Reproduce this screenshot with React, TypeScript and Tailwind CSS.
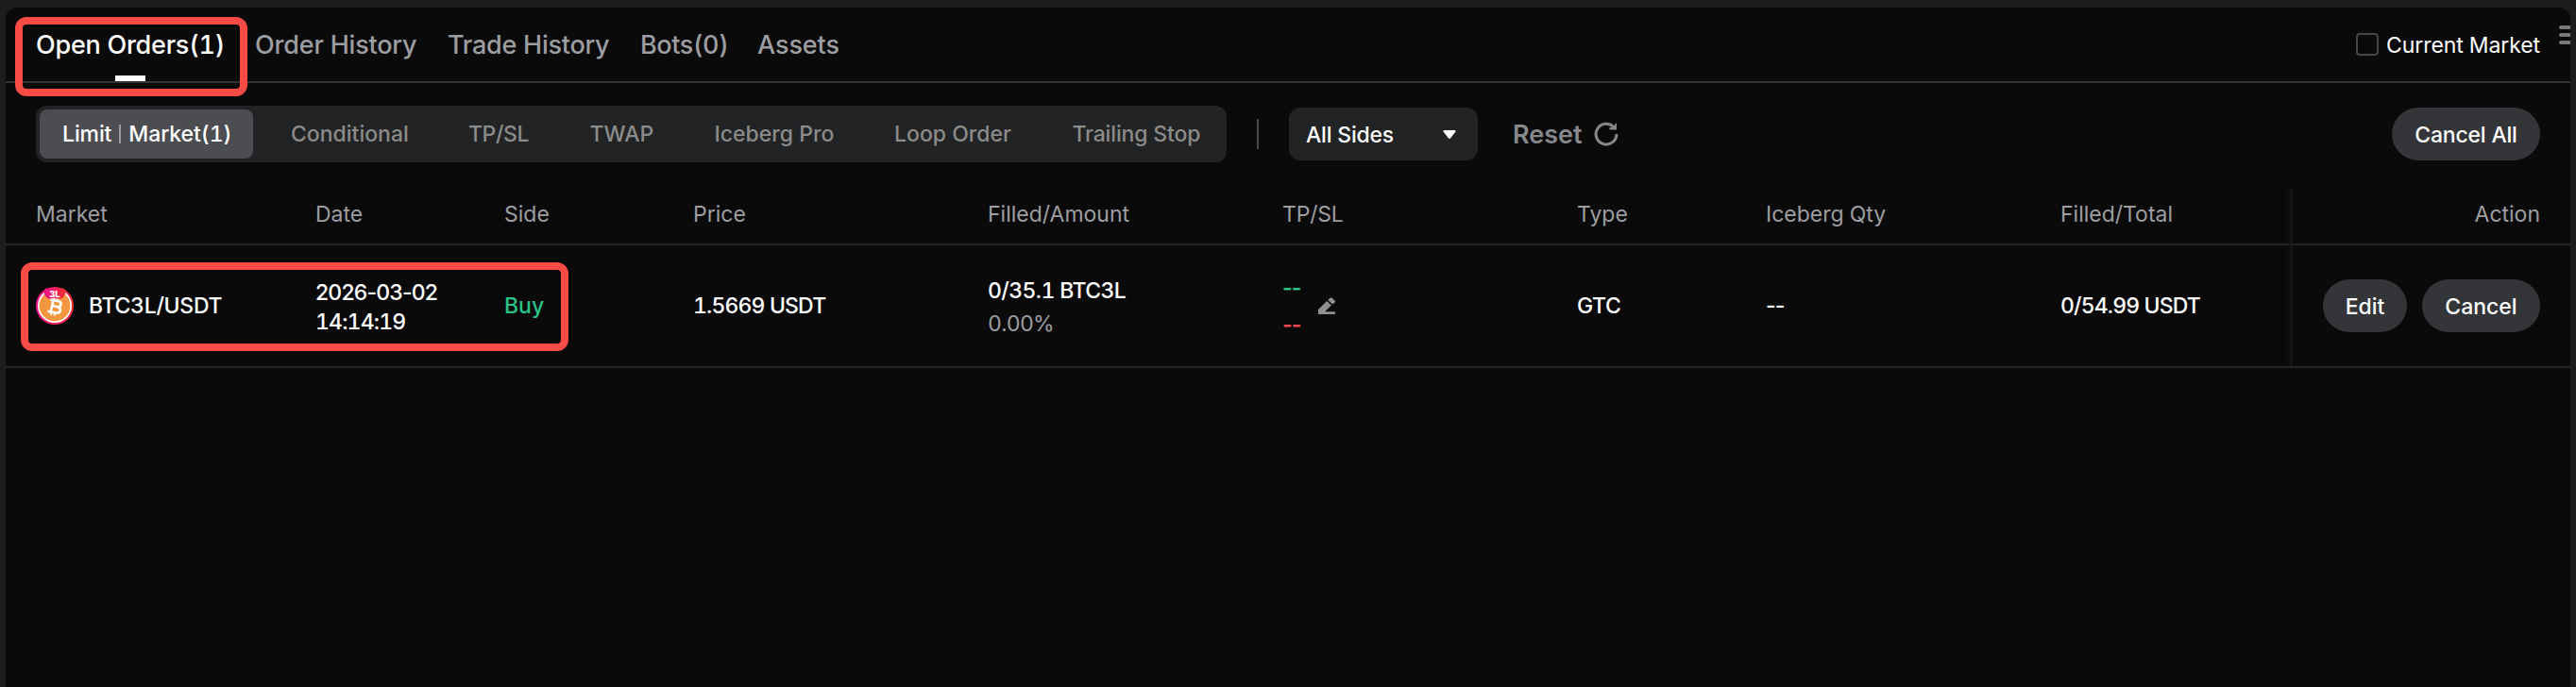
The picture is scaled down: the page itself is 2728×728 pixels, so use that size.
import React from 'react';

const tabs = [
  { label: 'Open Orders(1)', style: 'w-[200px] tracking-[-0.25px]', active: true },
  { label: 'Order History', style: 'w-[172px] tracking-[-0.2px]' },
  { label: 'Trade History', style: 'w-[172px] tracking-[-0.25px]' },
  { label: 'Bots(0)', style: 'w-[92px] tracking-[-0.4px]' },
  { label: 'Assets', style: 'w-[88px] tracking-[-0.1px]' },
];

const filters = [
  { label: 'Conditional', style: 'w-[124px]' },
  { label: 'TP/SL', style: 'w-[64.5px] tracking-[-0.4px]' },
  { label: 'TWAP', style: 'w-[68px]' },
  { label: 'Iceberg Pro', style: 'w-[126.5px]' },
  { label: 'Loop Order', style: 'w-[124.5px]' },
  { label: 'Trailing Stop', style: 'w-[135.5px] tracking-[-0.15px]' },
];

const columns = 'grid grid-cols-[296px_200px_200px_312px_312px_312px_200px_312px_246px_262px]';

const CoinIcon = () => (
  <svg className="w-10 h-10 shrink-0" viewBox="0 0 40 40">
    <defs>
      <linearGradient id="ring" x1="0" y1="0" x2="1" y2="0">
        <stop offset="0" stopColor="#f0148c" />
        <stop offset="1" stopColor="#f02a2e" />
      </linearGradient>
    </defs>
    <circle cx="20" cy="20" r="20" fill="url(#ring)" />
    <circle cx="20" cy="20" r="17.2" fill="#f3963f" stroke="#fff" strokeWidth="1.6" />
    <path d="M10 1.800h20l1.200 3.200c0 4-2.400 7.500-6 7.500H14.800c-3.600 0-6-3.500-6-7.500z" fill="url(#ring)" />
    <g transform="rotate(12 20 21)" fill="none" stroke="#fff" strokeWidth="2.6">
      <path d="M14 14.500h8c5.200 0 5.200 6 0 6h-4.500M22 20.500c6 0 6 6.700 0 6.700h-8.500M17 14.500v12.700" />
      <path d="M17.800 12v2.500M21.500 12v2.500M17.800 27v3.500M21.500 27v3.500" strokeWidth="2" />
    </g>
    <text x="20" y="11" textAnchor="middle" fill="#fff" fontSize="9.500" fontWeight="800" fontFamily="Inter, sans-serif">3L</text>
  </svg>
);

const ResetIcon = () => (
  <svg className="w-[26px] h-[26px]" viewBox="0 0 26 26" fill="none" stroke="#86888c" strokeWidth="3">
    <path d="M20.500 5.200A10.900 10.900 0 1 0 23.900 13" />
    <path d="M24 1v7.500h-7.500v-2.500h3z" fill="#86888c" stroke="none" />
  </svg>
);

const EditIcon = () => (
  <svg className="w-[18px] h-[18px]" viewBox="0 0 18 18" fill="#8f8f8f">
    <path d="M0 18V13L9.200 3.900 13.900 8.500 7.200 15.300H17a1 1 0 0 1 1 1V17a1 1 0 0 1-1 1z" />
    <path d="M10.300 2.900 12.500.7a1.500 1.500 0 0 1 2.100 0L17.500 3.500a1.500 1.500 0 0 1 0 2.100L15.200 7.600z" />
  </svg>
);

const App = () => {
  return (
    <div className="w-[2728px] h-[728px] bg-[#1b1d1e] pt-2 px-1.5 overflow-hidden font-['Inter',sans-serif] text-[23px] text-white whitespace-nowrap tabular-nums">
      <div className="relative h-[720px] bg-[#0a0a0a] rounded-t-xl overflow-hidden">
        <div className="flex items-center justify-between h-20 pl-8 pr-8 border-b-2 border-[#333333]">
          <div className="flex h-full gap-8 text-[27px] font-medium">
            {tabs.map((tab) => (
              <div key={tab.label} className={`relative flex items-center h-full pt-0.5 ${tab.style} ${tab.active ? 'text-white' : 'text-[#9d9ea1]'}`}>
                {tab.label}
                {tab.active && <span className="absolute bottom-0 left-[84px] w-8 h-1.5 bg-white" />}
              </div>
            ))}
          </div>
          <label className="flex items-center gap-2">
            <span className="w-6 h-6 border-2 border-[#43464b] rounded-[4px]" />
            <span className="w-[163px] pt-0.5 tracking-[-0.08px]">Current Market</span>
          </label>
          <div className="absolute top-[19px] right-0 flex flex-col gap-1">
            <span className="w-3 h-1 rounded-l-full bg-[#777777]" />
            <span className="w-3 h-1 rounded-l-full bg-[#777777]" />
            <span className="w-3 h-1 rounded-l-full bg-[#777777]" />
          </div>
        </div>

        <div className="flex items-center h-[108px] px-8">
          <div className="flex items-center gap-4 h-[60px] p-1 rounded-xl bg-[#222325] font-medium text-[#8b8b89]">
            <div className="flex items-center w-[226px] h-full pl-6 rounded-lg bg-[#4c4d51] text-white tracking-[-0.1px]">
              <span>Limit</span>
              <span className="w-0.5 h-5 mx-2 bg-[#9a9a9c]" />
              <span>Market(1)</span>
            </div>
            {filters.map((item) => (
              <div key={item.label} className="px-6">
                <div className={item.style}>{item.label}</div>
              </div>
            ))}
          </div>
          <div className="w-0.5 h-8 mx-8 bg-[#48494b]" />
          <button className="flex items-center justify-between w-[200px] h-14 pl-[18px] pr-[23px] pt-0.5 rounded-xl bg-[#222325] font-medium tracking-[-0.2px]">
            All Sides
            <svg className="w-3.5 h-2.5" viewBox="0 0 14 10" fill="#fff">
              <path d="M1.500 0h11c1 0 1.500 1 .8 1.800L8 8.500c-.6.700-1.400.700-2 0L.7 1.800C0 1 .5 0 1.500 0z" />
            </svg>
          </button>
          <div className="flex items-center gap-2.5 ml-[37px] text-[27px] font-semibold text-[#86888c]">
            <span className="w-[76px] pt-0.5">Reset</span>
            <ResetIcon />
          </div>
          <button className="ml-auto w-[157px] h-14 pt-0.5 rounded-full bg-[#343538] font-medium tracking-[-0.2px]">Cancel All</button>
        </div>

        <div className={`${columns} items-center h-16 pl-8 pr-8 border-b-2 border-[#242428] text-[#9d9ea1]`}>
          <span>Market</span>
          <span>Date</span>
          <span>Side</span>
          <span>Price</span>
          <span>Filled/Amount</span>
          <span className="tracking-[-0.2px]">TP/SL</span>
          <span>Type</span>
          <span>Iceberg Qty</span>
          <span>Filled/Total</span>
          <span className="text-right">Action</span>
        </div>

        <div className={`${columns} items-center h-[130px] pl-8 pr-8 border-b-2 border-[#242428] font-medium`}>
          <div className="flex items-center gap-4">
            <CoinIcon />
            <span className="tracking-[-0.3px]">BTC3L/USDT</span>
          </div>
          <div className="pt-[3px] leading-[31px] tracking-[-0.8px]">
            <span className="normal-nums">2026-03-02</span>
            <br />
            <span>14:14:19</span>
          </div>
          <span className="text-[#2bc287]">Buy</span>
          <span className="tracking-[-0.85px]">1.5669 USDT</span>
          <div className="pt-[3px] leading-[35px]">
            <div className="tracking-[-0.6px]">0/35.1 BTC3L</div>
            <div className="font-normal text-[#9d9ea1] tracking-[-0.7px]">0.00%</div>
          </div>
          <div className="flex items-center gap-[18px]">
            <div className="pt-0.5 leading-[39px] tracking-[-0.9px] normal-nums font-semibold">
              <div className="text-[#2bc287]">--</div>
              <div className="text-[#f0475a]">--</div>
            </div>
            <EditIcon />
          </div>
          <span className="tracking-[-0.4px]">GTC</span>
          <span className="tracking-[-0.9px] normal-nums">--</span>
          <span className="tracking-[-0.85px]">0/54.99 USDT</span>
          <div className="flex justify-end gap-4">
            <button className="w-[89px] h-14 pt-0.5 rounded-full bg-[#343538]">Edit</button>
            <button className="w-[125px] h-14 pt-0.5 rounded-full bg-[#343538]">Cancel</button>
          </div>
        </div>

        {/* edge shadow of the pinned action column */}
        <div className="absolute top-[192px] left-[2416px] w-1.5 h-[188px] bg-gradient-to-r from-transparent to-[#191919]" />

        <div className="absolute top-2.5 left-2.5 w-[246px] h-[84px] border-8 border-[#f94b46] rounded-xl" />
        <div className="absolute top-[270px] left-4 w-[580px] h-[94px] border-8 border-[#f94b46] rounded-xl" />
      </div>
    </div>
  );
};

export default App;
